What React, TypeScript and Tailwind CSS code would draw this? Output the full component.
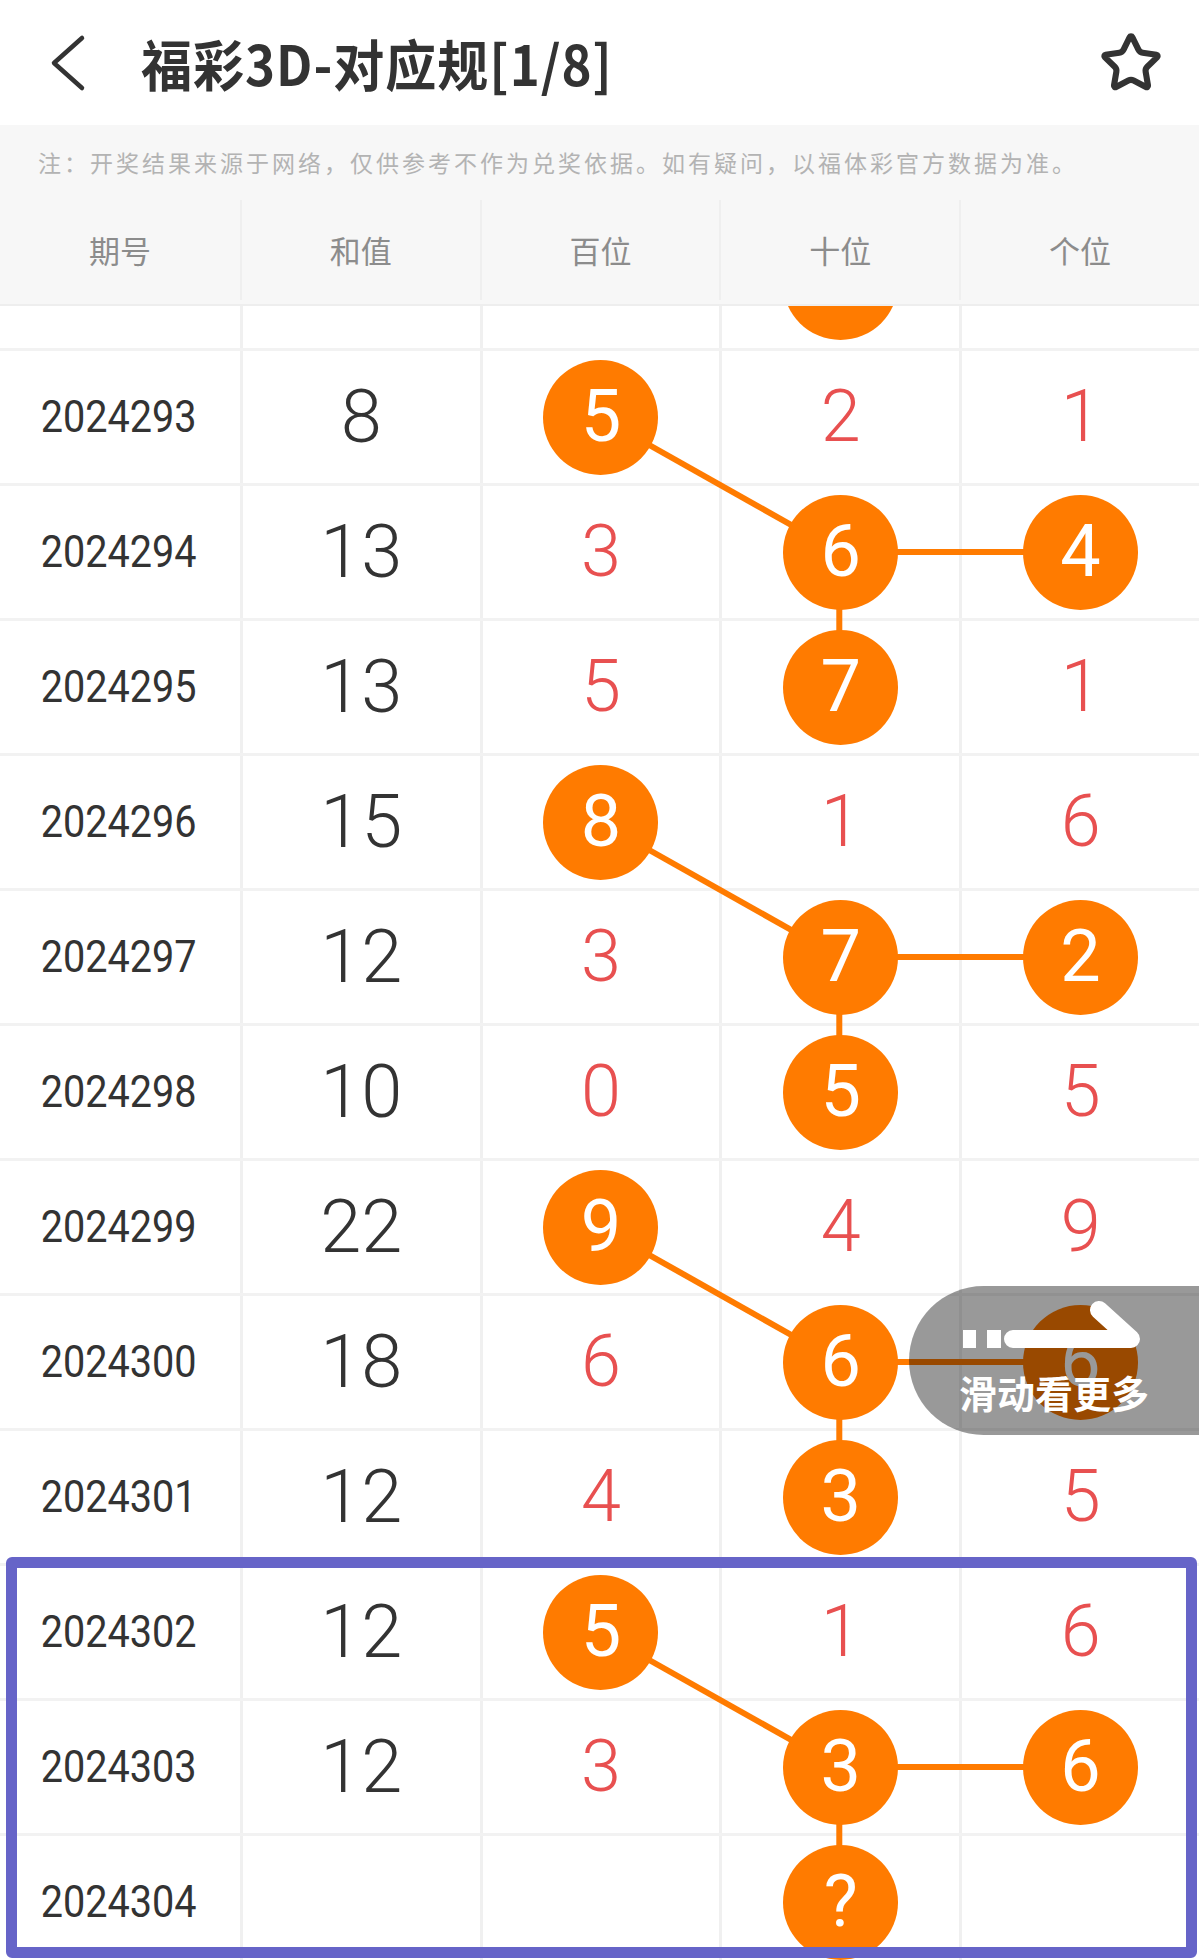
import { Star } from 'lucide-react';

type Row = { no: string; sum: string; d: string[]; balls: boolean[] };

const rows: Row[] = [
  // row that is scrolled half out of view: only the bottom of its ball shows
  { no: '', sum: '', d: ['', '', ''], balls: [false, true, false] },
  { no: '2024293', sum: '8', d: ['5', '2', '1'], balls: [true, false, false] },
  { no: '2024294', sum: '13', d: ['3', '6', '4'], balls: [false, true, true] },
  { no: '2024295', sum: '13', d: ['5', '7', '1'], balls: [false, true, false] },
  { no: '2024296', sum: '15', d: ['8', '1', '6'], balls: [true, false, false] },
  { no: '2024297', sum: '12', d: ['3', '7', '2'], balls: [false, true, true] },
  { no: '2024298', sum: '10', d: ['0', '5', '5'], balls: [false, true, false] },
  { no: '2024299', sum: '22', d: ['9', '4', '9'], balls: [true, false, false] },
  { no: '2024300', sum: '18', d: ['6', '6', '6'], balls: [false, true, true] },
  { no: '2024301', sum: '12', d: ['4', '3', '5'], balls: [false, true, false] },
  { no: '2024302', sum: '12', d: ['5', '1', '6'], balls: [true, false, false] },
  { no: '2024303', sum: '12', d: ['3', '3', '6'], balls: [false, true, true] },
  { no: '2024304', sum: '', d: ['', '?', ''], balls: [false, true, false] },
];

const ROW_H = 135;
const COL_W = 1199 / 5;
const cx = (c: number) => COL_W * c + 1.5 + (COL_W - 3) / 2;
const cy = (r: number) => ROW_H * r + 66;

// groups of three draws linked: 百位 -> 十位, 十位 -> 个位, 十位 -> next 十位
const links: [number, number, number, number][] = [];
[1, 4, 7, 10].forEach((r) => {
  links.push([r, 2, r + 1, 3]);
  links.push([r + 1, 3, r + 1, 4]);
  links.push([r + 1, 3, r + 2, 3]);
});

const num = "font-['Roboto','Noto_Sans_CJK_SC',sans-serif]";
const cjk = "font-['Noto_Sans_CJK_SC','Noto_Sans',sans-serif]";

function Ball({ v }: { v: string }) {
  return (
    <div className={`relative z-10 flex h-[115px] w-[115px] items-center justify-center rounded-full bg-[#ff7b00] text-[72px] leading-none text-white ${num}`}>
      {v}
    </div>
  );
}

export default function App() {
  return (
    <div className="relative flex h-[1960px] w-[1199px] flex-col overflow-hidden bg-white">
      {/* Top bar */}
      <div className="flex h-[125px] shrink-0 items-center">
        <svg width="40" height="60" viewBox="0 0 40 60" className="ml-[48px]">
          <polyline points="34,5 6,30 34,55" fill="none" stroke="#333" strokeWidth="4.5" strokeLinecap="round" strokeLinejoin="round" />
        </svg>
        <h1 className={`ml-[53px] scale-y-[1.08] text-[51px] font-bold leading-none tracking-[1px] text-[#333] ${cjk}`}>
          福彩3D-对应规[1/8]
        </h1>
        <Star size={64} strokeWidth={2.3} className="ml-auto mr-[36px] text-[#333]" />
      </div>

      {/* Notice */}
      <div className={`flex h-[75px] shrink-0 items-center bg-[#f7f7f7] pl-[38px] text-[23px] tracking-[3px] text-[#b3b3b3] ${cjk}`}>
        注：开奖结果来源于网络，仅供参考不作为兑奖依据。如有疑问，以福体彩官方数据为准。
      </div>

      {/* Table head */}
      <div className={`grid h-[106px] shrink-0 grid-cols-5 border-b-[2px] border-[#eeeeee] bg-[#f7f7f7] pb-[4px] text-[31px] text-[#8c8c8c] ${cjk}`}>
        {['期号', '和值', '百位', '十位', '个位'].map((h, i) => (
          <div key={h} className={`flex items-center justify-center ${i > 0 ? 'border-l-[2px] border-[#efefef]' : ''}`}>
            {h}
          </div>
        ))}
      </div>

      {/* Table body (scrolled) */}
      <div className="relative flex-1 overflow-hidden">
        <div className="relative mt-[-90px]">
          {rows.map((r, i) => (
            <div key={i} className="grid h-[135px] grid-cols-5 border-b-[3px] border-[#f2f2f2]">
              <div className={`flex items-center justify-center pr-[3px] text-[44px] leading-none text-[#333] ${num}`}>
                <span className="scale-x-[0.9]">{r.no}</span>
              </div>
              <div className={`flex items-center justify-center border-l-[3px] border-[#f0f0f0] text-[74px] font-light leading-none text-[#333] ${num}`}>
                {r.sum}
              </div>
              {r.d.map((v, j) => (
                <div key={j} className="flex items-center justify-center border-l-[3px] border-[#f0f0f0]">
                  {r.balls[j] ? (
                    <Ball v={v} />
                  ) : (
                    <span className={`text-[72px] font-light leading-none text-[#e85050] ${num}`}>{v}</span>
                  )}
                </div>
              ))}
            </div>
          ))}

          <svg className="pointer-events-none absolute left-0 top-0" width="1199" height={ROW_H * rows.length}>
            {links.map(([r1, c1, r2, c2], i) => (
              <line key={i} x1={cx(c1)} y1={cy(r1)} x2={cx(c2)} y2={cy(r2)} stroke="#ff7b00" strokeWidth="6" />
            ))}
          </svg>
        </div>
      </div>

      {/* Highlight frame round the latest draws */}
      <div className="pointer-events-none absolute left-[6px] top-[1557px] z-20 h-[401px] w-[1191px] rounded-[6px] border-[11px] border-[#6664c8]" />

      {/* Swipe hint */}
      <div className="pointer-events-none absolute left-[909px] top-[1286px] z-20 h-[149px] w-[290px] rounded-l-full bg-black/40">
        <svg className="absolute left-0 top-0" width="290" height="149">
          <rect x="54" y="44" width="13" height="18" fill="#fff" />
          <rect x="78" y="44" width="14" height="18" fill="#fff" />
          <polyline points="104,53 222,53 190,24" fill="none" stroke="#fff" strokeWidth="18" strokeLinecap="round" strokeLinejoin="round" />
        </svg>
        <div className={`absolute left-[50px] top-[87px] text-[38px] font-bold leading-none text-white ${cjk}`}>
          滑动看更多
        </div>
      </div>
    </div>
  );
}
